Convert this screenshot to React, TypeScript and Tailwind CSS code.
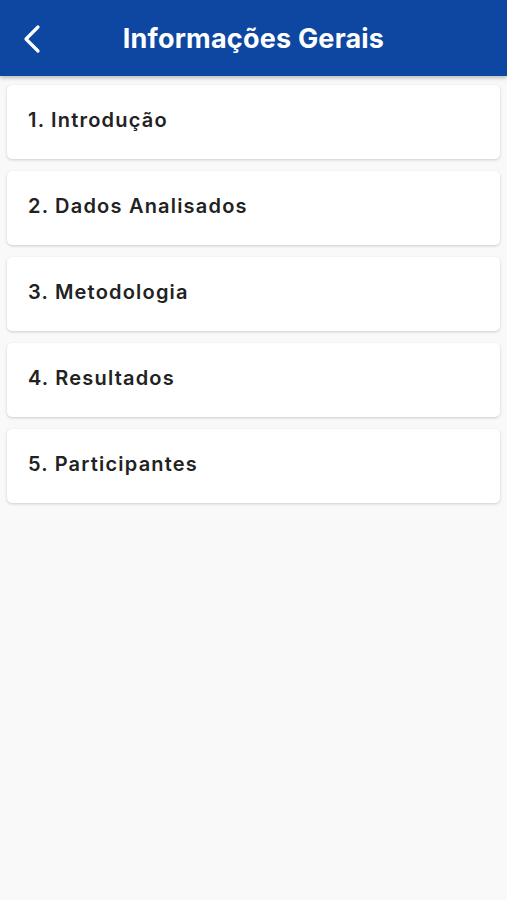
import React from 'react';

const items = ['1. Introdução', '2. Dados Analisados', '3. Metodologia', '4. Resultados', '5. Participantes'];

const App: React.FC = () => {
  return (
    <div className="min-h-[900px] w-full bg-[#f9f9f9]" style={{ fontFamily: 'Inter, "Noto Sans", sans-serif' }}>
      <header className="relative flex h-[76px] items-center justify-center bg-[#0d47a1] shadow-[0_2px_4px_rgba(0,0,0,0.25)]">
        <button className="absolute left-[18px] top-[24px] flex h-[30px] w-[28px] items-center justify-center">
          <svg width="20" height="30" viewBox="0 0 20 30" fill="none">
            <path d="M16 3 L4 15 L16 27" stroke="white" strokeWidth="3.2" strokeLinecap="round" strokeLinejoin="round" />
          </svg>
        </button>
        <h1 className="pt-[2px] text-[27px] font-bold tracking-[0.2px] text-white">Informações Gerais</h1>
      </header>
      <div className="flex flex-col gap-[12px] px-[7px] pt-[9px]">
        {items.map((item) => (
          <div
            key={item}
            className="flex h-[74px] items-center rounded-[5px] bg-white px-[21px] pb-[5px] shadow-[0_1px_3px_rgba(0,0,0,0.18)]"
          >
            <span className="text-[20px] font-semibold tracking-[1.2px] text-[#222222]">{item}</span>
          </div>
        ))}
      </div>
    </div>
  );
};

export default App;
